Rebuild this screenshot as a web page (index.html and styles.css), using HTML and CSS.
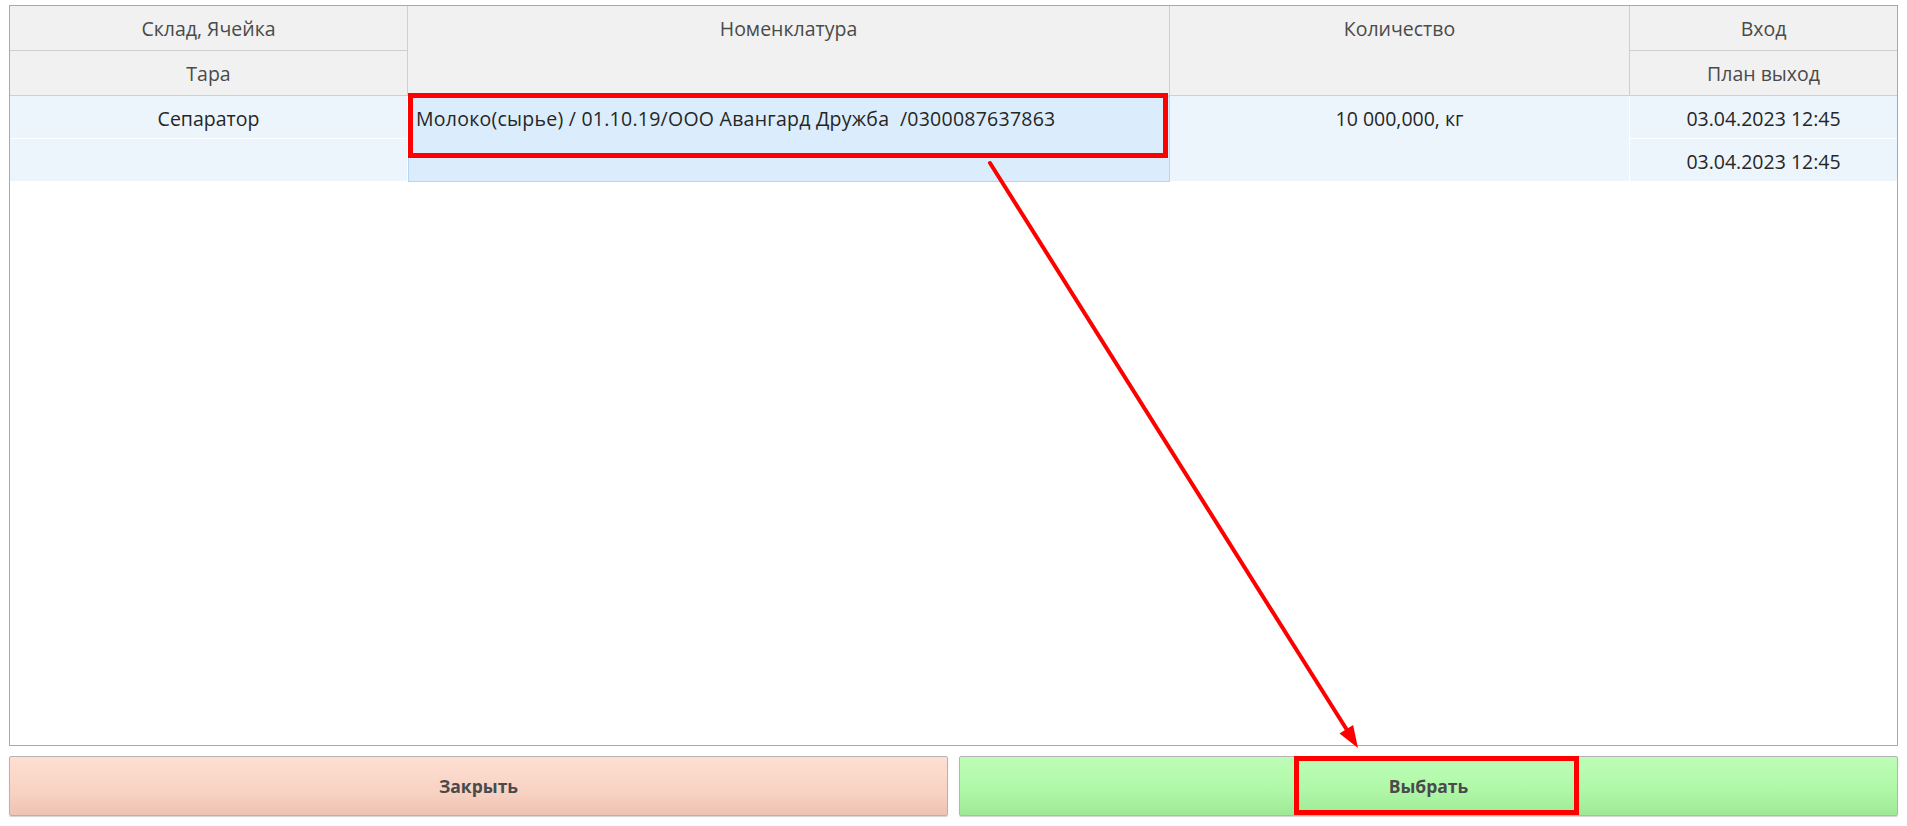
FILE: index.html
```html
<!DOCTYPE html>
<html lang="ru">
<head>
<meta charset="utf-8">
<title>Выбор</title>
<link rel="stylesheet" href="styles.css">
</head>
<body>
<div class="page">
  <div class="table">
    <div class="grid">
      <div class="hcell c1 r1">Склад, Ячейка</div>
      <div class="hcell c2 r12 top">Номенклатура</div>
      <div class="hcell c3 r12 top">Количество</div>
      <div class="hcell c4 r1">Вход</div>
      <div class="hcell c1 r2">Тара</div>
      <div class="hcell c4 r2">План выход</div>

      <div class="dcell c1 r3">Сепаратор</div>
      <div class="dcell c2 r34 sel">Молоко(сырье) / 01.10.19/ООО Авангард Дружба&nbsp; /0300087637863</div>
      <div class="dcell c3 r34 top">10 000,000, кг</div>
      <div class="dcell c4 r3">03.04.2023 12:45</div>
      <div class="dcell c1 r4"></div>
      <div class="dcell c4 r4">03.04.2023 12:45</div>
    </div>
  </div>
  <div class="buttons">
    <button class="btn btn-close">Закрыть</button>
    <button class="btn btn-select">Выбрать</button>
  </div>
</div>
<svg class="annot" width="1907" height="826" viewBox="0 0 1907 826" xmlns="http://www.w3.org/2000/svg">
  <rect x="410.5" y="95.5" width="755" height="60" fill="none" stroke="#ff0000" stroke-width="5"/>
  <rect x="1296.5" y="758.5" width="280" height="54" fill="none" stroke="#ff0000" stroke-width="5"/>
  <line x1="990" y1="163" x2="1347" y2="730" stroke="#ff0000" stroke-width="4" stroke-linecap="round"/>
  <polygon points="1358,748 1339.5,733.6 1353.1,725.1" fill="#ff0000"/>
</svg>
</body>
</html>
```

FILE: styles.css
```css
html, body {
  margin: 0;
  padding: 0;
  background: #ffffff;
}

body {
  font-family: "Open Sans", "Noto Sans", "DejaVu Sans", sans-serif;
  position: relative;
  width: 1907px;
  height: 826px;
  overflow: hidden;
}

.page {
  padding: 5px 9px 0 9px;
  display: flex;
  flex-direction: column;
  gap: 10px;
}

.table {
  height: 741px;
  border: 1px solid #a9a9a9;
  box-sizing: border-box;
  background: #ffffff;
}

.grid {
  display: grid;
  grid-template-columns: 398px 762px 460px 1fr;
  grid-template-rows: 45px 45px 43px 43px;
}

.hcell, .dcell {
  display: flex;
  align-items: center;
  justify-content: center;
  font-size: 19.5px;
  box-sizing: border-box;
  white-space: nowrap;
}

.hcell {
  background: #f1f1f1;
  color: #4a4a4a;
  border-right: 1px solid #cfcfcf;
  border-bottom: 1px solid #cfcfcf;
  padding-top: 0;
}

.dcell {
  background: #edf5fc;
  color: #262626;
  border-right: 1px solid #ffffff;
  border-bottom: 1px solid #ffffff;
  padding-top: 2px;
}

.c4 { border-right: none; }

.hcell.top {
  align-items: flex-start;
  line-height: 45px;
  padding-top: 0;
}

.dcell.top {
  align-items: flex-start;
  line-height: 43px;
  padding-top: 1px;
}

.c1 { grid-column: 1; }
.c2 { grid-column: 2; }
.c3 { grid-column: 3; }
.c4 { grid-column: 4; }
.r1 { grid-row: 1; }
.r2 { grid-row: 2; }
.r3 { grid-row: 3; }
.r4 { grid-row: 4; }
.r12 { grid-row: 1 / span 2; }
.r34 { grid-row: 3 / span 2; }

.dcell.sel {
  background: #dbedfc;
  border: 1px solid #b3d6f4;
  justify-content: flex-start;
  align-items: flex-start;
  line-height: 43px;
  padding: 0 0 0 7px;
  letter-spacing: 0.25px;
}

.buttons {
  display: flex;
  gap: 11px;
  height: 60px;
}

.btn {
  flex: 1;
  height: 60px;
  border: 1px solid #b4b4b4;
  border-radius: 2px;
  box-shadow: 0 1px 1px rgba(0, 0, 0, 0.18);
  font-family: "Open Sans", "Noto Sans", "DejaVu Sans", sans-serif;
  font-weight: 700;
  font-size: 17.5px;
  color: #4a4a4a;
  padding: 0;
}

.btn-close {
  background: linear-gradient(to bottom, #fedfd2 0%, #f8d2c3 60%, #edc3b3 100%);
}

.btn-select {
  background: linear-gradient(to bottom, #bdfdb7 0%, #b0f8a8 55%, #9fe996 100%);
}

.annot {
  position: absolute;
  top: 0;
  left: 0;
  pointer-events: none;
}
```
